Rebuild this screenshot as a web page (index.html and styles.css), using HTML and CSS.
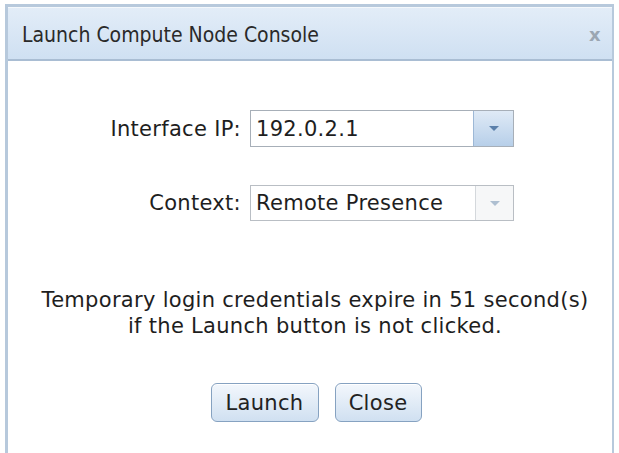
FILE: index.html
```html
<!DOCTYPE html>
<html>
<head>
<meta charset="utf-8">
<title>Launch Compute Node Console</title>
<link rel="stylesheet" href="styles.css">
</head>
<body>
<div class="dialog">
  <div class="titlebar">
    <span class="title">Launch Compute Node Console</span>
    <span class="close-x">x</span>
  </div>
  <div class="content">
    <div class="form">
      <label class="label">Interface IP:</label>
      <div class="select active">
        <span class="value">192.0.2.1</span>
        <span class="arrow"><svg width="12" height="7" viewBox="0 0 12 7"><path d="M1 1h10L6 6z" fill="#5b80aa"/></svg></span>
      </div>
      <label class="label">Context:</label>
      <div class="select disabled">
        <span class="value">Remote Presence</span>
        <span class="arrow"><svg width="12" height="7" viewBox="0 0 12 7"><path d="M1 1h10L6 6z" fill="#aebfd1"/></svg></span>
      </div>
    </div>
    <p class="notice">Temporary login credentials expire in 51 second(s)<br>if the Launch button is not clicked.</p>
    <div class="buttons">
      <button class="btn launch">Launch</button>
      <button class="btn close">Close</button>
    </div>
  </div>
</div>
</body>
</html>
```

FILE: styles.css
```css
html, body {
  margin: 0;
  padding: 0;
  background: #ffffff;
}

body {
  font-family: "DejaVu Sans", sans-serif;
  font-size: 21px;
  letter-spacing: 0.3px;
  color: #1e1e1e;
  overflow: hidden;
}

.dialog {
  margin: 4px 0 0 5px;
  width: 609px;
  height: 470px;
  border: 3px solid #b7c9dc;
  border-right-width: 2px;
  border-bottom: none;
  background: #ffffff;
  box-sizing: border-box;
}

.titlebar {
  height: 52px;
  display: flex;
  align-items: center;
  justify-content: space-between;
  padding: 0 11px 0 14px;
  background: linear-gradient(#e3edf8, #cfe0f2);
  border-bottom: 2px solid #a9bdd3;
  box-shadow: inset 0 1px 0 #f4f8fc;
}

.title {
  font-family: "DejaVu Sans Condensed", "DejaVu Sans", sans-serif;
  font-size: 21px;
  letter-spacing: 0;
  color: #2a2a2a;
  padding-top: 4px;
}

.close-x {
  font-family: "DejaVu Sans", sans-serif;
  font-weight: bold;
  font-size: 18px;
  color: #9ba6b2;
  padding-top: 2px;
}

.content {
  display: flex;
  flex-direction: column;
  align-items: stretch;
  padding-top: 49px;
}

.form {
  display: grid;
  grid-template-columns: 233px 264px;
  column-gap: 9px;
  row-gap: 38px;
  align-items: center;
}

.label {
  text-align: right;
}

.select {
  height: 37px;
  box-sizing: border-box;
  border: 1px solid #a7afb8;
  display: flex;
  align-items: stretch;
  background: #fff;
}

.select.disabled {
  height: 36px;
  border-color: #b9bec4;
}

.value {
  flex: 1;
  display: flex;
  align-items: center;
  padding-left: 5px;
}

.arrow {
  width: 39px;
  display: flex;
  align-items: center;
  justify-content: center;
}

.select.active .arrow {
  background: linear-gradient(#dfeaf6, #b7cfe9);
  border-left: 1px solid #9db8d6;
}

.select.disabled .arrow {
  width: 37px;
  background: #f6f7f8;
  border-left: 1px solid #d4d8dc;
}

.notice {
  margin: 66px 0 0 0;
  padding-left: 10px;
  text-align: center;
  line-height: 26px;
}

.buttons {
  display: flex;
  justify-content: center;
  gap: 16px;
  margin-top: 44px;
  padding-left: 12px;
}

.btn {
  font-family: inherit;
  font-size: 21px;
  letter-spacing: 0.3px;
  color: #222;
  height: 39px;
  border: 1px solid #86a2c1;
  border-radius: 6px;
  background: linear-gradient(#f3f7fc, #d0e0f1);
  box-shadow: inset 0 1px 0 #ffffff;
  padding: 0;
}

.btn.launch {
  width: 108px;
}

.btn.close {
  width: 87px;
}
```
